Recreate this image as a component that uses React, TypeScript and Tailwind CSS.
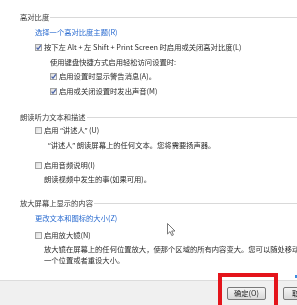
import React from "react";

const Box = ({ checked = false }: { checked?: boolean }) => (
  <span className="relative inline-block w-[7px] h-[7px] shrink-0 border border-[#a3a3a3] bg-gradient-to-br from-[#dedede] to-[#fafafa]">
    {checked && (
      <svg viewBox="0 0 7 7" className="absolute left-[-1px] top-[-1px] w-[7px] h-[7px]">
        <path d="M1.6 3.6 L3 5.3 L5.8 1.4" fill="none" stroke="#4a63a8" strokeWidth="1.3" />
      </svg>
    )}
  </span>
);

const Q = ({ children }: { children: React.ReactNode }) => (
  <span className="font-['Noto_Sans',sans-serif]">{children}</span>
);

const Section = ({ title, mt }: { title: string; mt: string }) => (
  <div className={`h-[12px] flex items-center pl-[20px] whitespace-nowrap text-[#3a3a3a] ${mt}`}>
    <span>{title}</span>
    <span className="flex-1 h-px bg-[#d9d9d9] ml-[1px]" />
  </div>
);

export default function App() {
  return (
    <div className="relative w-[297px] h-[305px] overflow-hidden bg-white font-['Noto_Sans_CJK_SC','Noto_Sans',sans-serif] text-[7.3px] text-[#2b2b2b]">
      <div className="blur-[0.25px]">
        <div className="h-[280px] flex flex-col pt-[11px]">
          <Section title="高对比度" mt="mt-0" />
          <div className="h-[12px] leading-[12px] mt-[3px] pl-[35px] whitespace-nowrap text-[#2a6bd0]">选择一个高对比度主题(R)</div>
          <div className="h-[12px] mt-[3px] pl-[35px] flex items-center gap-[2px] whitespace-nowrap">
            <Box checked />
            <span>按下左 Alt + 左 Shift + Print Screen 时启用或关闭高对比度(L)</span>
          </div>
          <div className="h-[12px] leading-[12px] mt-[3px] pl-[50px] whitespace-nowrap">使用键盘快捷方式启用轻松访问设置时:</div>
          <div className="h-[12px] mt-[2px] pl-[50px] flex items-center gap-[2px] whitespace-nowrap">
            <Box checked />
            <span>启用设置时显示警告消息(A)。</span>
          </div>
          <div className="h-[12px] mt-[3px] pl-[50px] flex items-center gap-[2px] whitespace-nowrap">
            <Box checked />
            <span>启用或关闭设置时发出声音(M)</span>
          </div>

          <Section title="朗读听力文本和描述" mt="mt-[14px]" />
          <div className="h-[12px] mt-[1px] pl-[35px] flex items-center gap-[2px] whitespace-nowrap">
            <Box />
            <span>启用 <Q>“</Q>讲述人<Q>”</Q> (U)</span>
          </div>
          <div className="h-[12px] leading-[12px] mt-[3px] pl-[48px] whitespace-nowrap">
            <Q>“</Q>讲述人<Q>”</Q> 朗读屏幕上的任何文本。您将需要扬声器。
          </div>
          <div className="h-[12px] mt-[8px] pl-[35px] flex items-center gap-[2px] whitespace-nowrap">
            <Box />
            <span>启用音频说明(I)</span>
          </div>
          <div className="h-[12px] leading-[12px] mt-[2px] pl-[44px] whitespace-nowrap">朗读视频中发生的事(如果可用)。</div>

          <Section title="放大屏幕上显示的内容" mt="mt-[12px]" />
          <div className="h-[12px] leading-[12px] mt-[3px] pl-[35px] whitespace-nowrap text-[#2a6bd0]">更改文本和图标的大小(Z)</div>
          <div className="h-[12px] mt-[5px] pl-[35px] flex items-center gap-[2px] whitespace-nowrap">
            <Box />
            <span>启用放大镜(N)</span>
          </div>
          <div className="mt-[3px] pl-[44px] leading-[11px] whitespace-nowrap">
            <div>放大镜在屏幕上的任何位置放大，使那个区域的所有内容变大。您可以随处移动放大镜、将其锁定在</div>
            <div>一个位置或者重设大小。</div>
          </div>
        </div>

        <div className="h-[25px] bg-[#f0f0f0] border-t border-[#dcdcdc] flex items-start pt-[6px] pl-[227px] gap-[17px]">
          <button className="w-[39px] h-[13px] shrink-0 rounded-[2px] border border-[#7a7a7a] bg-gradient-to-b from-[#f4f4f4] to-[#d9d9d9] text-[7.3px] leading-[11px] text-[#222]">确定(O)</button>
          <button className="w-[39px] h-[13px] shrink-0 rounded-[2px] border border-[#7a7a7a] bg-gradient-to-b from-[#f4f4f4] to-[#d9d9d9] text-[7.3px] leading-[11px] text-[#222] text-left pl-[8px]">取消</button>
        </div>
      </div>

      {/* red highlight annotation */}
      <div className="absolute left-[218px] top-[273px] w-[60px] h-[36px] border-[4px] border-[#e4141b]" />
      {/* small blue mark */}
      <div className="absolute left-[295px] top-[275px] w-[2px] h-[3px] bg-[#3c8ee0]" />

      {/* mouse cursor */}
      <svg className="absolute left-[167px] top-[223px]" width="10" height="14" viewBox="0 0 10 14">
        <path d="M0.5 0.5 L0.5 11 L3 8.6 L4.8 12.6 L6.4 11.9 L4.7 8 L8 8 Z" fill="#fff" stroke="#6a6a6a" strokeWidth="0.9" strokeLinejoin="round" />
      </svg>
    </div>
  );
}
